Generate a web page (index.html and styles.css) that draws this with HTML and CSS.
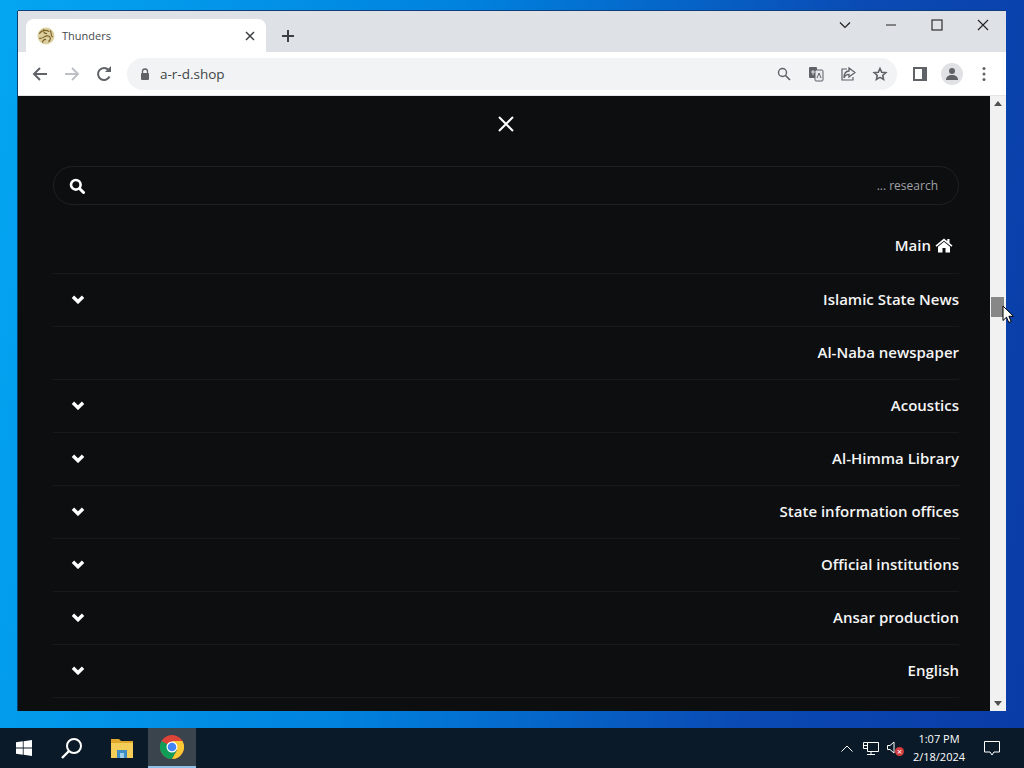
FILE: index.html
```html
<!DOCTYPE html>
<html lang="en">
<head>
<meta charset="utf-8">
<title>Thunders</title>
<link rel="stylesheet" href="styles.css">
</head>
<body>
<div class="desktop">
  <div class="window">
    <div class="tabstrip">
      <div class="tab">
        <svg class="favicon" viewBox="0 0 16 16"><circle cx="8" cy="8" r="7.500" fill="#dccf9f"/><path d="M2 6c2-3 5-4 9-2M2 10c3 1 5-3 8-2s2 4 0 5M6 2c-1 3 1 4 3 4M5 14c0-2 1-3 3-3M12 3c1 3 0 5 2 6" fill="none" stroke="#7a5f24" stroke-width="1"/></svg>
        <span class="tab-title">Thunders</span>
        <svg class="tab-close" viewBox="0 0 10 10"><path d="M1 1l8 8M9 1l-8 8" stroke="#3c4043" stroke-width="1.500"/></svg>
      </div>
      <svg class="new-tab" viewBox="0 0 14 14"><path d="M7 1v12M1 7h12" stroke="#3c4043" stroke-width="2"/></svg>
      <div class="caption">
        <svg class="cap-chevron" viewBox="0 0 12 8"><path d="M1 1.500l5 5 5-5" fill="none" stroke="#222" stroke-width="1.200"/></svg>
        <svg class="cap-btn" viewBox="0 0 12 12"><path d="M1 6h10" stroke="#222" stroke-width="1"/></svg>
        <svg class="cap-btn" viewBox="0 0 12 12"><rect x="1" y="1" width="10" height="10" fill="none" stroke="#222" stroke-width="1.100"/></svg>
        <svg class="cap-btn" viewBox="0 0 12 12"><path d="M1 1l10 10M11 1L1 11" stroke="#222" stroke-width="1.100"/></svg>
      </div>
    </div>
    <div class="toolbar">
      <svg class="tool" viewBox="0 0 16 16"><path d="M15 8H2.500M8 2L2 8l6 6" fill="none" stroke="#5f6368" stroke-width="2"/></svg>
      <svg class="tool" viewBox="0 0 16 16"><path d="M1 8h12.500M8 2l6 6-6 6" fill="none" stroke="#bdc1c6" stroke-width="2"/></svg>
      <svg class="tool" viewBox="0 0 16 16"><path d="M13.500 10.500A6 6 0 1 1 12.500 4" fill="none" stroke="#5f6368" stroke-width="2"/><path d="M9 6h6V0z" fill="#5f6368"/></svg>
      <div class="omnibox">
        <svg class="lock" viewBox="0 0 10 12"><path d="M2.500 5V3.500a2.500 2.500 0 0 1 5 0V5" fill="none" stroke="#5f6368" stroke-width="1.300"/><rect x="1" y="5" width="8" height="7" rx="1" fill="#5f6368"/></svg>
        <span class="url">a-r-d.shop</span>
        <div class="omni-icons">
          <svg class="omni-icon" viewBox="0 0 16 16"><circle cx="6.500" cy="6.500" r="4" fill="none" stroke="#5f6368" stroke-width="1.400"/><path d="M9.500 9.500l4.500 4.500" stroke="#5f6368" stroke-width="1.700"/></svg>
          <svg class="omni-icon" viewBox="0 0 16 16"><rect x="1" y="1" width="8" height="11" rx="1" fill="#5f6368"/><rect x="7" y="4" width="8" height="11" rx="1" fill="#e8eaed" stroke="#5f6368"/><path d="M3 6h4M5 4v5" fill="none" stroke="#fff" stroke-width=".8"/><path d="M9 12l2-5 2 5" fill="none" stroke="#5f6368" stroke-width="1"/></svg>
          <svg class="omni-icon" viewBox="0 0 16 16"><path d="M7 3H2v11h11v-3" fill="none" stroke="#5f6368" stroke-width="1.200"/><path d="M9 2l6 4.500L9 11V8.300C6.500 8.300 5 9.500 4 12c0-4 2-6.800 5-7z" fill="none" stroke="#5f6368" stroke-width="1.300"/></svg>
          <svg class="omni-icon" viewBox="0 0 16 16"><path d="M8 2.500l1.700 3.800 4.100.4-3.100 2.800.9 4L8 11.400l-3.600 2.100.9-4-3.100-2.800 4.100-.4z" fill="none" stroke="#5f6368" stroke-width="1.600"/></svg>
        </div>
      </div>
      <svg class="tool side" viewBox="0 0 14 14"><path fill-rule="evenodd" d="M0 0h14v14H0zM2 2v10h7V2z" fill="#5f6368"/></svg>
      <div class="avatar"><svg viewBox="0 0 14 14"><circle cx="7" cy="4" r="3" fill="#5f6368"/><path d="M1 13c0-3.500 2.500-5 6-5s6 1.500 6 5z" fill="#5f6368"/></svg></div>
      <svg class="tool dots" viewBox="0 0 4 16"><circle cx="2" cy="2.500" r="1.500" fill="#5f6368"/><circle cx="2" cy="8" r="1.500" fill="#5f6368"/><circle cx="2" cy="13.500" r="1.500" fill="#5f6368"/></svg>
    </div>
    <div class="viewport">
      <main class="page">
        <div class="close-row">
          <svg class="close-x" viewBox="0 0 16 16"><path d="M1 1l14 14M15 1L1 15" stroke="#fff" stroke-width="2"/></svg>
        </div>
        <div class="search">
          <svg class="search-icon" viewBox="0 0 16 16"><circle cx="6.800" cy="6.800" r="4.800" fill="none" stroke="#fff" stroke-width="2.600"/><path d="M10.500 10.500l4 4" stroke="#fff" stroke-width="3" stroke-linecap="round"/></svg>
          <span class="placeholder">... research</span>
        </div>
        <nav class="menu">
          <div class="item main-item">
            <span>Main</span>
            <svg class="home" viewBox="0 0 18 15"><path d="M9 0.500L0.500 7.500l1 1.200L9 2.700l7.500 6 1-1.200L14.500 5V1h-2.200v2.200z" fill="#fff"/><path d="M9 3.800L3 8.700V14.500h4.500V10h3v4.500H15V8.700z" fill="#fff"/></svg>
          </div>
          <div class="item"><svg class="chev" viewBox="0 0 12 8"><path d="M1.500 1.500L6 6l4.500-4.500" fill="none" stroke="#fff" stroke-width="3"/></svg><span>Islamic State News</span></div>
          <div class="item"><span>Al-Naba newspaper</span></div>
          <div class="item"><svg class="chev" viewBox="0 0 12 8"><path d="M1.500 1.500L6 6l4.500-4.500" fill="none" stroke="#fff" stroke-width="3"/></svg><span>Acoustics</span></div>
          <div class="item"><svg class="chev" viewBox="0 0 12 8"><path d="M1.500 1.500L6 6l4.500-4.500" fill="none" stroke="#fff" stroke-width="3"/></svg><span>Al-Himma Library</span></div>
          <div class="item"><svg class="chev" viewBox="0 0 12 8"><path d="M1.500 1.500L6 6l4.500-4.500" fill="none" stroke="#fff" stroke-width="3"/></svg><span>State information offices</span></div>
          <div class="item"><svg class="chev" viewBox="0 0 12 8"><path d="M1.500 1.500L6 6l4.500-4.500" fill="none" stroke="#fff" stroke-width="3"/></svg><span>Official institutions</span></div>
          <div class="item"><svg class="chev" viewBox="0 0 12 8"><path d="M1.500 1.500L6 6l4.500-4.500" fill="none" stroke="#fff" stroke-width="3"/></svg><span>Ansar production</span></div>
          <div class="item"><svg class="chev" viewBox="0 0 12 8"><path d="M1.500 1.500L6 6l4.500-4.500" fill="none" stroke="#fff" stroke-width="3"/></svg><span>English</span></div>
        </nav>
      </main>
      <div class="scrollbar">
        <span class="arrow up"></span>
        <div class="track"><div class="thumb"></div></div>
        <span class="arrow down"></span>
      </div>
    </div>
  </div>
  <svg class="cursor" viewBox="0 0 12 19"><path d="M1 1v14.500l3.500-3.300 2.300 5.300 2.400-1-2.300-5.200H11.500z" fill="#fff" stroke="#000" stroke-width="1"/></svg>
  <footer class="taskbar">
    <div class="task-slot"><svg class="win-logo" viewBox="0 0 16 16"><path d="M0 2.300l6.800-1v6.300H0zM7.600 1.200L16 0v7.600H7.600zM0 8.400h6.800v6.300L0 13.700zM7.600 8.400H16V16l-8.400-1.200z" fill="#fff"/></svg></div>
    <div class="task-slot"><svg class="task-search" viewBox="0 0 22 22"><circle cx="13" cy="9" r="7" fill="none" stroke="#fff" stroke-width="2"/><path d="M8 14l-7 7" stroke="#fff" stroke-width="2.400"/></svg></div>
    <div class="task-slot wide"><svg class="folder" viewBox="0 0 22 20"><path d="M0 1h8l2 2h12v4H0z" fill="#e0a92c"/><path d="M0 5h22v15H0z" fill="#f5ce5a"/><path d="M6 12h10v8H6z" fill="#3f8fc4"/><path d="M9 15h4v5H9z" fill="#9fd0ea"/></svg></div>
    <div class="task-slot active"><svg class="chrome" viewBox="0 0 24 24"><circle cx="12" cy="12" r="12" fill="#db4437"/><path d="M12 12L1.600 6A12 12 0 0 0 12 24l5.200-9z" fill="#0f9d58"/><path d="M12 6h10.400A12 12 0 0 1 12 24l5.200-9z" fill="#fcc934"/><circle cx="12" cy="12" r="5.500" fill="#fff"/><circle cx="12" cy="12" r="4.300" fill="#4285f4"/></svg></div>
    <div class="tray">
      <svg class="tray-caret" viewBox="0 0 12 7"><path d="M0.500 6.500L6 1l5.500 5.500" fill="none" stroke="#fff" stroke-width="1"/></svg>
      <svg class="tray-net" viewBox="0 0 16 14"><path d="M4.500 1.500h11v9h-11zM.500 1.500h4M.500 4.500h4M.500 1.500v6h4M4 13.500h8M8 10.500v3" fill="none" stroke="#fff" stroke-width="1"/></svg>
      <div class="tray-sound">
        <svg class="speaker" viewBox="0 0 9 13"><path d="M.500 4.500h2.500l4-3.500v11l-4-3.500H.500z" fill="none" stroke="#fff" stroke-width="1"/></svg>
        <span class="mute-badge">×</span>
      </div>
      <div class="clock"><span>1:07 PM</span><span>2/18/2024</span></div>
      <svg class="notify" viewBox="0 0 16 15"><path d="M.500.500h15v10.500H10l-2 3-2-3H.500z" fill="none" stroke="#fff" stroke-width="1"/></svg>
    </div>
  </footer>
</div>
</body>
</html>
```

FILE: styles.css
```css
* { box-sizing: border-box; }
html, body { margin: 0; height: 100%; }
body { overflow: hidden; font-family: "Open Sans", "Noto Sans", sans-serif; }

.desktop {
  position: relative;
  width: 1024px;
  height: 768px;
  display: flex;
  flex-direction: column;
  background: linear-gradient(100deg, #04a6f2 0%, #0082de 40%, #0a4ab4 75%, #0a3ba6 100%);
}

.window {
  position: absolute;
  left: 18px;
  top: 11px;
  width: 988px;
  height: 700px;
  display: flex;
  flex-direction: column;
  box-shadow: 0 -1px 0 #0d3d7a, -1px 0 0 #0a3f70;
}

.tabstrip {
  height: 41px;
  flex: none;
  display: flex;
  align-items: flex-end;
  background: #dee1e6;
  padding-left: 8px;
}
.tab {
  width: 240px;
  height: 33px;
  background: #fff;
  border-radius: 8px 8px 0 0;
  display: flex;
  align-items: center;
  padding: 0 8px 0 11px;
}
.favicon { width: 18px; height: 18px; flex: none; }
.tab-title { margin-left: 7px; flex: 1; font-size: 11px; color: #45494d; }
.tab-close { width: 10px; height: 10px; margin-right: 3px; flex: none; }
.new-tab { width: 14px; height: 14px; margin: 0 0 9px 15px; flex: none; }
.caption {
  margin-left: auto;
  align-self: flex-start;
  height: 28px;
  display: flex;
  align-items: center;
  padding-right: 17px;
}
.cap-chevron { width: 12px; height: 8px; margin-right: 34px; }
.cap-btn { width: 12px; height: 12px; margin-left: 34px; }
.cap-chevron + .cap-btn { margin-left: 0; }

.toolbar {
  height: 44px;
  flex: none;
  display: flex;
  align-items: center;
  background: #fff;
  border-bottom: 1px solid #e3e5e8;
  padding: 1px 0 0 14px;
}
.tool { width: 16px; height: 16px; flex: none; margin-right: 16px; }
.omnibox {
  width: 770px;
  height: 32px;
  margin-left: -1px;
  border-radius: 16px;
  background: #f1f3f4;
  display: flex;
  align-items: center;
  padding: 0 0 0 13px;
  flex: none;
}
.lock { width: 10px; height: 12px; flex: none; }
.url { margin-left: 10px; font-size: 13.500px; color: #3f4347; }
.omni-icons { margin-left: auto; display: flex; gap: 16px; padding-right: 9px; }
.omni-icon { width: 16px; height: 16px; display: block; }
.side { margin: 0 0 0 16px; width: 14px; height: 14px; }
.avatar {
  width: 22px;
  height: 22px;
  margin-left: 14px;
  border-radius: 50%;
  background: #dfe1e5;
  display: flex;
  align-items: center;
  justify-content: center;
}
.avatar svg { width: 14px; height: 14px; }
.dots { width: 4px; margin: 0 0 0 19px; }

.viewport { flex: 1; min-height: 0; display: flex; }
.page {
  flex: 1;
  min-width: 0;
  overflow: hidden;
  background: #0c0e10;
  padding: 0 31px 0 35px;
}
.close-row { height: 70px; display: flex; justify-content: center; padding: 20px 0 0 0; }
.close-x { width: 16px; height: 16px; }

.search {
  height: 39px;
  border: 1px solid #1e2022;
  border-radius: 20px;
  display: flex;
  align-items: center;
  justify-content: space-between;
  padding: 0 20px 0 15px;
}
.search-icon { width: 16px; height: 16px; }
.placeholder { font-size: 12px; color: #a0a2a5; }

.menu { margin-top: 15px; }
.item {
  height: 53px;
  border-bottom: 1px solid #17191b;
  display: flex;
  align-items: center;
  justify-content: flex-end;
  position: relative;
  padding-bottom: 3px;
  font-size: 15px;
  font-weight: 600;
  color: #f5f5f5;
}
.main-item { height: 54px; padding-right: 6px; gap: 4px; }
.home { width: 18px; height: 15px; }
.chev { position: absolute; left: 18px; top: 21px; width: 14px; height: 9px; }

.scrollbar { width: 16px; flex: none; background: #f1f1f1; display: flex; flex-direction: column; align-items: center; }
.arrow { width: 0; height: 0; flex: none; border-left: 4px solid transparent; border-right: 4px solid transparent; }
.arrow.up { margin-top: 5px; border-bottom: 5px solid #505050; }
.arrow.down { margin-bottom: 5px; border-top: 5px solid #505050; }
.track { flex: 1; width: 100%; padding-top: 191px; }
.thumb { width: 13px; height: 20px; margin-left: 1px; background: #878787; }

.cursor { position: absolute; left: 1002px; top: 305px; width: 12px; height: 19px; }

.taskbar {
  position: absolute;
  left: 0;
  bottom: 0;
  width: 1024px;
  height: 40px;
  background: #0a1a28;
  display: flex;
  align-items: stretch;
}
.task-slot { width: 48px; display: flex; align-items: center; justify-content: center; }
.wide { width: 52px; }
.active { background: #3a444d; border-bottom: 2px solid #8fc1e8; }
.win-logo { width: 16px; height: 16px; }
.task-search { width: 22px; height: 22px; }
.folder { width: 22px; height: 20px; }
.chrome { width: 24px; height: 24px; }
.tray { margin-left: auto; display: flex; align-items: center; color: #fff; }
.tray-caret { width: 12px; height: 7px; margin-right: 10px; }
.tray-net { width: 16px; height: 14px; margin-right: 8px; }
.tray-sound { position: relative; width: 18px; height: 14px; margin-right: 5px; }
.speaker { width: 9px; height: 13px; display: block; }
.mute-badge {
  position: absolute;
  left: 8px;
  top: 6px;
  width: 9px;
  height: 9px;
  border-radius: 50%;
  background: #d23b3b;
  font-size: 9px;
  line-height: 9px;
  text-align: center;
  color: #fff;
}
.clock {
  width: 58px;
  display: flex;
  flex-direction: column;
  align-items: center;
  font-size: 11px;
  line-height: 18px;
  margin-right: 16px;
  white-space: nowrap;
}
.notify { width: 16px; height: 15px; margin-right: 24px; }
```
